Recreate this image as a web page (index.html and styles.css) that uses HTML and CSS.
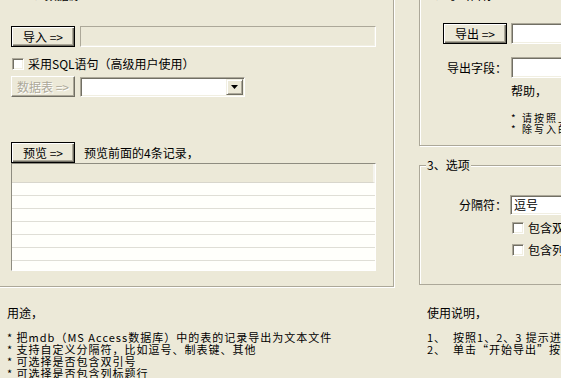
FILE: index.html
```html
<!DOCTYPE html>
<html lang="zh-CN">
<head>
<meta charset="utf-8">
<title>导出</title>
<link rel="stylesheet" href="styles.css">
</head>
<body>
<div class="main">
  <section class="group group-source">
    <div class="group-title">1、数据源</div>
    <div class="group-content">
      <div class="row row-import">
        <button class="btn btn-default">导入 =&gt;</button>
        <div class="field field-disabled field-import"></div>
      </div>
      <label class="row row-check"><span class="check"></span><span>采用SQL语句（高级用户使用）</span></label>
      <div class="row row-table">
        <button class="btn btn-disabled">数据表 =&gt;</button>
        <div class="combo combo-table"><span class="combo-text"></span><span class="combo-arrow"><svg width="7" height="4" viewBox="0 0 7 4"><path d="M0 0H7L3.5 4Z" fill="#000"/></svg></span></div>
      </div>
      <div class="row row-preview">
        <button class="btn btn-default">预览 =&gt;</button>
        <span class="preview-note">预览前面的4条记录，</span>
      </div>
      <div class="grid">
        <div class="grid-head"></div>
        <div class="grid-row"></div>
        <div class="grid-row"></div>
        <div class="grid-row"></div>
        <div class="grid-row"></div>
        <div class="grid-row"></div>
        <div class="grid-row"></div>
        <div class="grid-row"></div>
      </div>
    </div>
  </section>
  <div class="right-col">
    <section class="group group-export">
      <div class="group-title">2、导出目标</div>
      <div class="group-content">
        <div class="row row-export">
          <button class="btn btn-default">导出 =&gt;</button>
          <div class="field field-export"></div>
        </div>
        <div class="row row-fields">
          <span class="field-label">导出字段：</span>
          <div class="field field-export"></div>
        </div>
        <div class="help-title">帮助，</div>
        <div class="help-list"><div>* 请按照上面</div><div>* 除写入的字</div></div>
      </div>
    </section>
    <section class="group group-options">
      <div class="group-title">3、选项</div>
      <div class="group-content">
        <div class="row row-sep">
          <span class="field-label">分隔符：</span>
          <div class="combo combo-sep"><span class="combo-text">逗号</span></div>
        </div>
        <label class="row row-opt row-opt1"><span class="check"></span><span>包含双引号</span></label>
        <label class="row row-opt row-opt2"><span class="check"></span><span>包含列标题行</span></label>
      </div>
    </section>
  </div>
</div>
<div class="notes">
  <div class="note note-usage">
    <div class="note-title">用途，</div>
    <div class="note-line">* 把mdb（MS Access数据库）中的表的记录导出为文本文件</div>
    <div class="note-line">* 支持自定义分隔符，比如逗号、制表键、其他</div>
    <div class="note-line">* 可选择是否包含双引号</div>
    <div class="note-line">* 可选择是否包含列标题行</div>
  </div>
  <div class="note note-help">
    <div class="note-title">使用说明，</div>
    <div class="note-line">1、&nbsp;&nbsp;按照1、2、3 提示进行</div>
    <div class="note-line">2、&nbsp;&nbsp;单击“开始导出”按钮</div>
  </div>
</div>
</body>
</html>
```
FILE: styles.css
```css
html, body {
  margin: 0;
  padding: 0;
  overflow: hidden;
}
body {
  width: 561px;
  height: 378px;
  background: #ECE9D8;
  font-family: "Noto Sans CJK SC", "Noto Sans", sans-serif;
  font-size: 12px;
  line-height: 12px;
  color: #000;
}

.main {
  display: flex;
  align-items: flex-start;
  margin-top: -2px;
}

.group {
  flex-shrink: 0;
  box-sizing: border-box;
  border: 1px solid #ACA899;
  box-shadow: inset 1px 1px 0 #fff, 1px 1px 0 #fff;
  display: flex;
  flex-direction: column;
  align-items: flex-start;
}
.group-title {
  margin-top: -10px;
  margin-bottom: 2px;
  padding: 0 1px;
  height: 12px;
  line-height: 12px;
  background: #ECE9D8;
  white-space: nowrap;
}
.group-content {
  display: flex;
  flex-direction: column;
  align-items: flex-start;
}

.group-source {
  margin-left: -8px;
  width: 402px;
  height: 289px;
}
.group-source .group-title { margin-left: 32px; }
.group-source .group-content { padding-left: 18px; }

.row {
  display: flex;
  align-items: center;
  white-space: nowrap;
}

.btn {
  box-sizing: border-box;
  width: 64px;
  height: 21px;
  padding: 0;
  margin: 0;
  font-family: inherit;
  font-size: 12px;
  line-height: 12px;
  color: #000;
  background: #ECE9D8;
  border: 1px solid #000;
  box-shadow: inset 1px 1px 0 #fff, inset -1px -1px 0 #716F64, inset -2px -2px 0 #ACA899;
}
.btn-disabled {
  color: #ACA899;
  text-shadow: 1px 1px 0 #fff;
  border-color: #fff #716F64 #716F64 #fff;
  box-shadow: inset -1px -1px 0 #ACA899;
}

.field {
  box-sizing: border-box;
  height: 21px;
  border: 1px solid;
  border-color: #ACA899 #fff #fff #ACA899;
  box-shadow: inset 1px 1px 0 #716F64, inset -1px -1px 0 #F1EFE2;
  background: #fff;
}
.field-disabled {
  background: #ECE9D8;
  box-shadow: inset -1px -1px 0 #F1EFE2;
}
.field-import { width: 296px; }

.check {
  box-sizing: border-box;
  width: 12px;
  height: 12px;
  background: #fff;
  border: 1px solid;
  border-color: #ACA899 #fff #fff #ACA899;
  box-shadow: inset 1px 1px 0 #716F64, inset -1px -1px 0 #F1EFE2;
}

.row-import { margin-top: 23px; gap: 5px; }
.row-check { margin-top: 11px; margin-left: 1px; gap: 4px; height: 12px; }
.row-table { margin-top: 6px; gap: 5px; }

.combo {
  box-sizing: border-box;
  height: 20px;
  display: flex;
  justify-content: space-between;
  align-items: stretch;
  padding: 1px;
  background: #fff;
  border: 1px solid;
  border-color: #ACA899 #fff #fff #ACA899;
  box-shadow: inset 1px 1px 0 #716F64, inset -1px -1px 0 #F1EFE2;
}
.combo-table { width: 165px; }
.combo-text {
  padding-left: 2px;
  line-height: 16px;
}
.combo-arrow {
  box-sizing: border-box;
  width: 17px;
  display: flex;
  align-items: center;
  justify-content: center;
  background: #ECE9D8;
  border: 1px solid;
  border-color: #F1EFE2 #716F64 #716F64 #F1EFE2;
  box-shadow: inset 1px 1px 0 #fff, inset -1px -1px 0 #ACA899;
}

.row-preview { margin-top: 45px; }
.preview-note { margin-left: 9px; }

.grid {
  box-sizing: border-box;
  width: 365px;
  height: 108px;
  border: 1px solid;
  border-color: #8E8C80 #fff #fff #8E8C80;
  background: #FFFFFB;
  overflow: hidden;
}
.grid-head {
  height: 18px;
  background: #ECE9D8;
  border-bottom: 1px solid #D8D6CC;
  border-right: 2px solid #F5F4EE;
}
.grid-row {
  height: 12px;
  border-bottom: 1px solid #DFDED6;
}

.right-col {
  flex-shrink: 0;
  margin-left: 25px;
  width: 142px;
  display: flex;
  flex-direction: column;
  overflow: hidden;
}
.group-export {
  width: 160px;
  height: 148px;
}
.group-options {
  width: 160px;
  height: 120px;
  margin-top: 19px;
}
.group-export .group-title,
.group-options .group-title { margin-left: 6px; }
.group-options .group-title { margin-top: -7px; margin-bottom: 0; }
.group-export .group-content,
.group-options .group-content { padding-left: 23px; }

.row-export { margin-top: 20px; gap: 4px; }
.field-export { width: 60px; }
.row-fields { margin-top: 13px; gap: 4px; }
.field-label {
  width: 64px;
  text-align: right;
}
.help-title {
  margin-top: 7px;
  margin-left: 68px;
}
.help-list {
  margin-top: 15px;
  margin-left: 68px;
  font-size: 10px;
  line-height: 11px;
  letter-spacing: 2px;
  white-space: nowrap;
}

.row-sep { margin-top: 24px; gap: 3px; }
.combo-sep { width: 60px; }
.row-opt { margin-left: 69px; gap: 4px; height: 12px; }
.row-opt1 { margin-top: 7px; }
.row-opt2 { margin-top: 10px; }

.notes {
  display: flex;
  margin-top: 20px;
  white-space: nowrap;
}
.note { flex-shrink: 0; }
.note-title {
  line-height: 12px;
  height: 12px;
  margin-bottom: 12px;
}
.note-line {
  font-size: 11px;
  letter-spacing: 1px;
  height: 12px;
  line-height: 12px;
}
.note-usage {
  margin-left: 7px;
  width: 420px;
}
.note-help {
  width: 134px;
  overflow: hidden;
}
```
